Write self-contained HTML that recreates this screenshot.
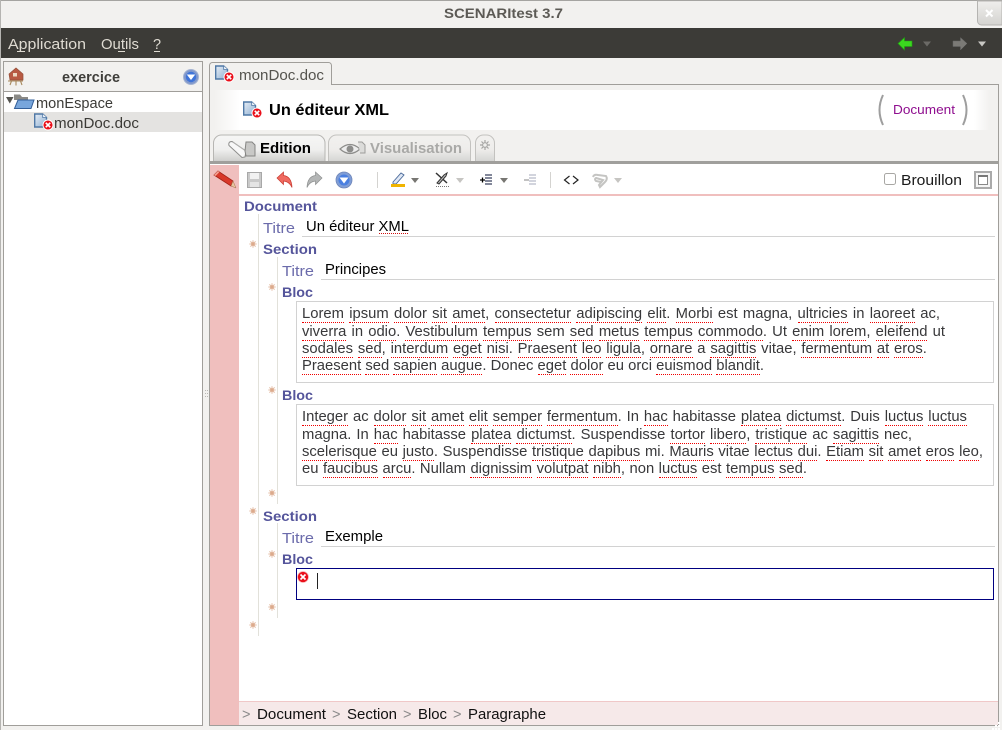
<!DOCTYPE html>
<html lang="fr"><head><meta charset="utf-8"><title>SCENARItest 3.7</title>
<style>
html,body{margin:0;padding:0;width:1002px;height:730px;overflow:hidden;background:#f2f1ef}
svg{position:absolute;left:0;top:0;display:block}
svg text{font-family:"Liberation Sans",sans-serif}
.b{font-weight:bold}
.l{position:absolute;left:302px;height:19px;overflow:hidden;font:14.800px/17px "Liberation Sans",sans-serif;color:#38383a;text-align:justify;text-align-last:justify;word-spacing:-2px}
.l i{font-style:normal;border-bottom:1px dotted #f00000}
</style></head><body>
<svg width="1002" height="730" viewBox="0 0 1002 730" xmlns="http://www.w3.org/2000/svg">
<defs>
<linearGradient id="tabg" x1="0" y1="0" x2="0" y2="1"><stop offset="0" stop-color="#f6f6f5"/><stop offset=".55" stop-color="#f0f0ef"/><stop offset="1" stop-color="#cfcfcd"/></linearGradient>
<linearGradient id="tabv" x1="0" y1="0" x2="0" y2="1"><stop offset="0" stop-color="#f2f1ef"/><stop offset=".55" stop-color="#eeedeb"/><stop offset="1" stop-color="#d6d6d4"/></linearGradient>
<linearGradient id="fl" x1="0" y1="0" x2="1" y2="0"><stop offset="0" stop-color="#f2f1ef"/><stop offset="1" stop-color="#fff"/></linearGradient>
<linearGradient id="fr" x1="0" y1="0" x2="1" y2="0"><stop offset="0" stop-color="#fff"/><stop offset="1" stop-color="#f2f1ef"/></linearGradient>
<linearGradient id="cl" x1="0" y1="0" x2="0" y2="1"><stop offset="0" stop-color="#efeeec"/><stop offset="1" stop-color="#d4d3d0"/></linearGradient>
<linearGradient id="doc" x1="0" y1="0" x2="1" y2="1"><stop offset="0" stop-color="#e6edf5"/><stop offset="1" stop-color="#8fb0d2"/></linearGradient>
<symbol id="err" viewBox="0 0 12 12" overflow="visible"><circle cx="6" cy="6" r="5.500" fill="#ea0f1a" stroke="#f6b8b8" stroke-width=".7"/><path d="M3.500 3.500l5 5M8.500 3.500l-5 5" stroke="#fff" stroke-width="1.700"/></symbol>
<symbol id="docico" viewBox="0 0 20 18" overflow="visible"><path d="M.7 1h8l3.800 3.500v9.500H.7z" fill="url(#doc)" stroke="#4f78a6" stroke-width="1.400"/><path d="M8.700 1v3.500h3.800" fill="#f4f7fa" stroke="#4f78a6" stroke-width=".8"/><circle cx="14" cy="12" r="5" fill="#ea0f1a" stroke="#fff" stroke-width=".9"/><path d="M11.800 9.800l4.400 4.400M16.200 9.800l-4.400 4.400" stroke="#fff" stroke-width="1.700"/></symbol>
<symbol id="star" viewBox="0 0 8 8" overflow="visible"><path d="M4 .3v7.400M.3 4h7.400M1.400 1.400l5.200 5.200M6.600 1.400l-5.200 5.200" stroke="#e4bea6" stroke-width="1"/><circle cx="4" cy="4" r="1.900" fill="#dcaa8c"/></symbol>
</defs>

<!-- window chrome -->
<rect width="1002" height="730" fill="#f2f1ef"/>
<rect x="0" y="0" width="1002" height="1" fill="#a5a4a1"/>
<rect x="0" y="0" width="1" height="730" fill="#b5b4b1"/>
<text x="444" y="18" class="b" font-size="13.500" fill="#5c5a55" textLength="119" lengthAdjust="spacingAndGlyphs">SCENARItest 3.7</text>
<path d="M977.500 1v20a4 4 0 0 0 4 4H1002V1z" fill="url(#cl)" stroke="#b5b4b1"/>
<path d="M986 10l6.500 6.500M992.500 10l-6.500 6.500" stroke="#fff" stroke-width="2"/>

<!-- menu bar -->
<rect x="1" y="28" width="1001" height="30" fill="#3c3b37"/>
<g fill="#dfdbd2" font-size="14.500">
<text x="8" y="49" textLength="78" lengthAdjust="spacingAndGlyphs">Application</text>
<text x="101" y="49" textLength="38" lengthAdjust="spacingAndGlyphs">Outils</text>
<text x="153" y="49">?</text>
<rect x="17" y="51" width="8" height="1"/><rect x="118" y="51" width="7" height="1"/><rect x="154" y="51" width="6" height="1"/>
</g>
<path d="M898 43.500l6.500-6v3.500h7.500v5.500h-7.500v3.500z" fill="#3bd81f" stroke="#1f9e10" stroke-width=".6"/>
<path d="M923 41.500h8l-4 5z" fill="#6b6a66"/>
<path d="M967 43.500l-6.500-6v3.500H953v5.500h7.500v3.500z" fill="#7b7a76" stroke="#666" stroke-width=".5"/>
<path d="M978 41.500h8l-4 5z" fill="#c8c7c3"/>

<!-- left panel -->
<rect x="3.500" y="61.500" width="199" height="664" fill="#fff" stroke="#a09e9a"/>
<rect x="4" y="62" width="198" height="29" fill="#f2f1ef"/>
<rect x="4" y="91" width="198" height="1" fill="#a09e9a"/>
<rect x="4" y="112" width="198" height="20" fill="#e4e3e1"/>
<g>
<path d="M9 74l7-6 7 6v6H10z" fill="#b85a42" stroke="#94503a" stroke-width=".7"/>
<rect x="13" y="73" width="4" height="3.500" fill="#ecd8c0"/>
<path d="M10 85l1.500-4M16 85.500v-4M22 85l-1.500-4M8 81h15" stroke="#a88a5e" stroke-width="1.100" fill="none"/>
</g>
<text x="62" y="82" class="b" font-size="14.500" fill="#3f3e3a" textLength="58" lengthAdjust="spacingAndGlyphs">exercice</text>
<circle cx="191" cy="77" r="7.500" fill="#8098cc" stroke="#a5b4d2" stroke-width="1"/>
<circle cx="191" cy="77" r="5.200" fill="#3f74d8"/>
<path d="M186.800 74.500h8.400l-4.200 5.500z" fill="#fff"/>
<path d="M6 97h7.500l-3.700 6.500z" fill="#55544f"/>
<path d="M14 94.500h6l2 2.500h6v3H14z" fill="#8a8985"/>
<path d="M18 100h16l-3 8.500H14.500z" fill="#78a6dc" stroke="#34609a" stroke-width="1"/>
<text x="36" y="108" font-size="14.500" fill="#3c3b37" textLength="77" lengthAdjust="spacingAndGlyphs">monEspace</text>
<use href="#docico" x="34" y="113" width="20" height="18"/>
<text x="54" y="128" font-size="14.500" fill="#3c3b37" textLength="85" lengthAdjust="spacingAndGlyphs">monDoc.doc</text>
<!-- splitter dots -->
<g fill="#b9b8b4"><rect x="205" y="390" width="1" height="1"/><rect x="205" y="393" width="1" height="1"/><rect x="205" y="396" width="1" height="1"/><rect x="207" y="390" width="1" height="1"/><rect x="207" y="393" width="1" height="1"/><rect x="207" y="396" width="1" height="1"/></g>

<!-- right panel -->
<rect x="209.500" y="84.500" width="789" height="641" fill="#f2f1ef" stroke="#a09e9a"/>
<path d="M209.500 85V65.500a3 3 0 0 1 3-3h116a3 3 0 0 1 3 3V85" fill="#f2f1ef" stroke="#a09e9a"/>
<rect x="210" y="84" width="121" height="2" fill="#f2f1ef"/>
<use href="#docico" x="215" y="65" width="20" height="18"/>
<text x="239" y="80" font-size="14.500" fill="#55544f" textLength="85" lengthAdjust="spacingAndGlyphs">monDoc.doc</text>

<!-- header band -->
<rect x="240" y="90" width="734" height="40" fill="#fff"/>
<rect x="214" y="90" width="26" height="40" fill="url(#fl)"/>
<rect x="974" y="90" width="16" height="40" fill="url(#fr)"/>
<use href="#docico" x="243" y="101" width="20" height="18"/>
<text x="269" y="115" class="b" font-size="15.500" fill="#000" textLength="120" lengthAdjust="spacingAndGlyphs">Un éditeur XML</text>
<path d="M883 95q-7 15 0 30" fill="none" stroke="#9e9e9e" stroke-width="2"/>
<path d="M963 95q7 15 0 30" fill="none" stroke="#9e9e9e" stroke-width="2"/>
<text x="893" y="114" font-size="12.500" fill="#8f0e8f" textLength="62" lengthAdjust="spacingAndGlyphs">Document</text>

<!-- tabs -->
<path d="M213.500 161v-18a8 8 0 0 1 8-8h95.500a8 8 0 0 1 8 8v18" fill="url(#tabg)" stroke="#b7b6b3"/>
<path d="M229 145.500q-1-4 3-4l14 9.500-1 6-3 .5z" fill="#f8f8f8" stroke="#8d8d8b" stroke-width="1"/>
<path d="M233 142l12 8.500" stroke="#b0b0ae" stroke-width="1"/>
<path d="M246 142h6l3 3v11h-9l-1-5z" fill="#c8c8c6" stroke="#858583" stroke-width="1"/>
<text x="260" y="153" class="b" font-size="14.500" fill="#000" textLength="51" lengthAdjust="spacingAndGlyphs">Edition</text>
<path d="M328.500 161v-18a8 8 0 0 1 8-8h126a8 8 0 0 1 8 8v18" fill="url(#tabv)" stroke="#c3c2bf"/>
<path d="M340 149q10-9 20 0q-10 9-20 0z" fill="#ececec" stroke="#8d8d8b" stroke-width="1.200"/>
<circle cx="350" cy="149" r="3.500" fill="#8d8d8b"/>
<path d="M358 142h4l3 3v8h-5" fill="#dcdcda" stroke="#9d9d9b" stroke-width="1"/>
<text x="370" y="153" class="b" font-size="14.500" fill="#a9a9a7" textLength="92" lengthAdjust="spacingAndGlyphs">Visualisation</text>
<path d="M475.500 161v-18a8 8 0 0 1 8-8h3a8 8 0 0 1 8 8v18" fill="url(#tabv)" stroke="#c3c2bf"/>
<path d="M485 140v10M480 145h10M481.500 141.500l7 7M488.500 141.500l-7 7" stroke="#a5a5a3" stroke-width="1.200"/>
<circle cx="485" cy="145" r="2.300" fill="#efefed" stroke="#a5a5a3"/>
<rect x="210" y="161" width="788" height="3" fill="#a09f9c"/>

<!-- editor -->
<rect x="210" y="164" width="788" height="561" fill="#fff"/>
<rect x="210" y="165" width="29" height="560" fill="#f0bfbe"/>
<rect x="239" y="194" width="759" height="2" fill="#f0bfbe"/>
<!-- pencil -->
<path d="M214 175l4-4 15 10-2 5z" fill="#d8382a" stroke="#a32218" stroke-width=".8"/>
<path d="M231 186l2-5 3 7z" fill="#e7c6a0" stroke="#a56a4a" stroke-width=".5"/>
<path d="M214 175l4-4 1.500 1-4 4z" fill="#f4a090"/>

<!-- toolbar -->
<path d="M247.500 172.500h14v15h-14z" fill="#c9c9c9" stroke="#a8a8a8"/>
<rect x="250" y="173" width="9" height="6" fill="#f2f2f2"/><rect x="250" y="182" width="9" height="5" fill="#e4e4e4"/>
<path d="M277 178l6.500-6v3.500q8 1 8.500 12q-2.500-6-8.500-6.500v3.500z" fill="#f06a60" stroke="#c83a30" stroke-width=".7"/>
<path d="M322 178l-6.500-6v3.500q-8 1-8.500 12q2.500-6 8.500-6.500v3.500z" fill="#b4b6b6" stroke="#8e9090" stroke-width=".7"/>
<circle cx="344" cy="180" r="8" fill="#7f9dd6" stroke="#6f86b8" stroke-width=".8"/>
<circle cx="344" cy="180" r="5.500" fill="#4a7fe0"/>
<path d="M339.500 177.500h9l-4.500 6z" fill="#fff"/>
<rect x="377" y="172" width="1" height="16" fill="#d4d3d0"/>
<path d="M393 182l8-9 3 2-8 9h-3z" fill="#dfe7f4" stroke="#4a6a9a" stroke-width=".9"/>
<rect x="391" y="184" width="14" height="3" fill="#f0b400"/>
<path d="M411 178h8l-4 5z" fill="#777672"/>
<path d="M436 173l11 10" stroke="#333" stroke-width="1.500"/>
<path d="M437 183l7-8 3-2-1 3-7 8z" fill="#bbb" stroke="#333" stroke-width="1"/>
<path d="M436 186.500h13" stroke="#777" stroke-width="1" stroke-dasharray="1 1"/>
<path d="M456 178h8l-4 5z" fill="#c6c5c2"/>
<path d="M485 175h7M485 178h7M485 181h7M485 184h7" stroke="#5a6078" stroke-width="1.400"/>
<path d="M480 180h5M482.500 177.500v5" stroke="#000" stroke-width="1.300"/>
<path d="M500 178h8l-4 5z" fill="#777672"/>
<path d="M529 175h7M529 178h7M529 181h7M529 184h7" stroke="#c4c6d2" stroke-width="1.400"/>
<path d="M524 180h5" stroke="#a0a0a0" stroke-width="1.300"/>
<rect x="550" y="172" width="1" height="16" fill="#d4d3d0"/>
<path d="M569.500 176l-5 4 5 4M573 176l5 4-5 4" fill="none" stroke="#222" stroke-width="1.200"/>
<path d="M593 177q1-3 5-2l8 1q2 3-1 6l-5 5-1-2 4-5-7-2q-2 1 0 3l5 1" fill="none" stroke="#c4c4c2" stroke-width="2"/>
<path d="M614 178h8l-4 5z" fill="#c6c5c2"/>
<rect x="884.500" y="173.500" width="11" height="11" rx="2" fill="#fff" stroke="#a8a7a4"/>
<text x="901" y="185" font-size="14.500" fill="#1a1a1a" textLength="61" lengthAdjust="spacingAndGlyphs">Brouillon</text>
<rect x="975" y="172" width="16" height="16" fill="#f4f4f4" stroke="#aaa" stroke-width="2"/>
<rect x="978.500" y="175.500" width="9" height="9" fill="#fff" stroke="#888"/>
<rect x="978" y="175" width="10" height="2" fill="#777"/>

<!-- guides -->
<rect x="258" y="214" width="1" height="422" fill="#e2e1da"/>
<rect x="277" y="257" width="1" height="247" fill="#e2e1da"/>
<rect x="277" y="523" width="1" height="95" fill="#e2e1da"/>

<!-- stars -->
<use href="#star" x="249" y="240" width="8" height="8"/>
<use href="#star" x="268" y="283" width="8" height="8"/>
<use href="#star" x="268" y="386" width="8" height="8"/>
<use href="#star" x="268" y="489" width="8" height="8"/>
<use href="#star" x="249" y="507" width="8" height="8"/>
<use href="#star" x="268" y="550" width="8" height="8"/>
<use href="#star" x="268" y="603" width="8" height="8"/>
<use href="#star" x="249" y="621" width="8" height="8"/>

<!-- labels -->
<g class="b" font-weight="bold" font-size="14" fill="#55559b">
<text x="244" y="211" textLength="73" lengthAdjust="spacingAndGlyphs">Document</text>
<text x="263" y="254" textLength="54" lengthAdjust="spacingAndGlyphs">Section</text>
<text x="282" y="297" textLength="31" lengthAdjust="spacingAndGlyphs">Bloc</text>
<text x="282" y="400" textLength="31" lengthAdjust="spacingAndGlyphs">Bloc</text>
<text x="263" y="521" textLength="54" lengthAdjust="spacingAndGlyphs">Section</text>
<text x="282" y="564" textLength="31" lengthAdjust="spacingAndGlyphs">Bloc</text>
</g>
<g font-size="15" fill="#6b6bab">
<text x="263" y="233" textLength="32" lengthAdjust="spacingAndGlyphs">Titre</text>
<text x="282" y="276" textLength="32" lengthAdjust="spacingAndGlyphs">Titre</text>
<text x="282" y="543" textLength="32" lengthAdjust="spacingAndGlyphs">Titre</text>
</g>
<g font-size="14.500" fill="#000">
<text x="306" y="231" textLength="103" lengthAdjust="spacingAndGlyphs">Un éditeur XML</text>
<text x="325" y="274" textLength="61" lengthAdjust="spacingAndGlyphs">Principes</text>
<text x="325" y="541" textLength="58" lengthAdjust="spacingAndGlyphs">Exemple</text>
</g>
<path d="M379 233.500h29" stroke="#d01010" stroke-width="1" stroke-dasharray="1 1"/>
<g fill="#d2d2d2">
<rect x="302" y="236" width="693" height="1"/>
<rect x="321" y="279" width="674" height="1"/>
<rect x="321" y="546" width="674" height="1"/>
</g>

<!-- boxes -->
<rect x="296.500" y="301.500" width="697" height="81" fill="#fff" stroke="#d2d2d2"/>
<rect x="296.500" y="404.500" width="697" height="81" fill="#fff" stroke="#d2d2d2"/>
<rect x="296.500" y="568.500" width="697" height="31" fill="#fff" stroke="#000080"/>
<use href="#err" x="297" y="571" width="12" height="12"/>
<rect x="317" y="573" width="1" height="16" fill="#222"/>

<!-- status bar -->
<rect x="239" y="701" width="759" height="24" fill="#f6e9e9"/>
<rect x="239" y="701" width="759" height="1" fill="#f0c8c8"/>
<g font-size="14.500">
<g fill="#8a8a8a"><text x="242" y="719">&gt;</text><text x="332" y="719">&gt;</text><text x="403" y="719">&gt;</text><text x="453" y="719">&gt;</text></g>
<g fill="#111">
<text x="257" y="719" textLength="69" lengthAdjust="spacingAndGlyphs">Document</text>
<text x="347" y="719" textLength="50" lengthAdjust="spacingAndGlyphs">Section</text>
<text x="418" y="719" textLength="29" lengthAdjust="spacingAndGlyphs">Bloc</text>
<text x="468" y="719" textLength="78" lengthAdjust="spacingAndGlyphs">Paragraphe</text>
</g></g>
<rect x="209" y="725" width="790" height="1" fill="#a09e9a"/>
<!-- grip -->
<g fill="#fff"><rect x="998" y="722" width="2" height="2"/><rect x="995" y="725" width="2" height="2"/><rect x="998" y="725" width="2" height="2"/><rect x="992" y="728" width="2" height="2"/><rect x="995" y="728" width="2" height="2"/><rect x="998" y="728" width="2" height="2"/></g>
</svg>

<div class="l" style="top:306px;width:638px"><i>Lorem</i> <i>ipsum</i> <i>dolor</i> <i>sit</i> <i>amet</i>, <i>consectetur</i> <i>adipiscing</i> <i>elit</i>. <i>Morbi</i> est magna, <i>ultricies</i> in <i>laoreet</i> ac,</div>
<div class="l" style="top:324px;width:643px"><i>viverra</i> in <i>odio</i>. <i>Vestibulum</i> <i>tempus</i> sem <i>sed</i> <i>metus</i> <i>tempus</i> <i>commodo</i>. Ut <i>enim</i> <i>lorem</i>, <i>eleifend</i> ut</div>
<div class="l" style="top:341px;width:625px"><i>sodales</i> <i>sed</i>, <i>interdum</i> <i>eget</i> <i>nisi</i>. <i>Praesent</i> <i>leo</i> <i>ligula</i>, <i>ornare</i> a <i>sagittis</i> vitae, <i>fermentum</i> <i>at</i> <i>eros</i>.</div>
<div class="l" style="top:358px;width:462px"><i>Praesent</i> <i>sed</i> <i>sapien</i> <i>augue</i>. Donec <i>eget</i> <i>dolor</i> eu orci <i>euismod</i> <i>blandit</i>.</div>
<div class="l" style="top:409px;width:665px"><i>Integer</i> ac <i>dolor</i> <i>sit</i> <i>amet</i> <i>elit</i> <i>semper</i> <i>fermentum</i>. In <i>hac</i> habitasse <i>platea</i> <i>dictumst</i>. Duis <i>luctus</i> <i>luctus</i></div>
<div class="l" style="top:427px;width:610px">magna. In <i>hac</i> habitasse <i>platea</i> <i>dictumst</i>. Suspendisse <i>tortor</i> <i>libero</i>, <i>tristique</i> ac <i>sagittis</i> nec,</div>
<div class="l" style="top:444px;width:681px"><i>scelerisque</i> eu <i>justo</i>. Suspendisse <i>tristique</i> <i>dapibus</i> mi. <i>Mauris</i> vitae <i>lectus</i> <i>dui</i>. <i>Etiam</i> <i>sit</i> <i>amet</i> <i>eros</i> <i>leo</i>,</div>
<div class="l" style="top:461px;width:505px">eu <i>faucibus</i> <i>arcu</i>. Nullam <i>dignissim</i> <i>volutpat</i> <i>nibh</i>, non <i>luctus</i> est <i>tempus</i> <i>sed</i>.</div>
</body></html>
